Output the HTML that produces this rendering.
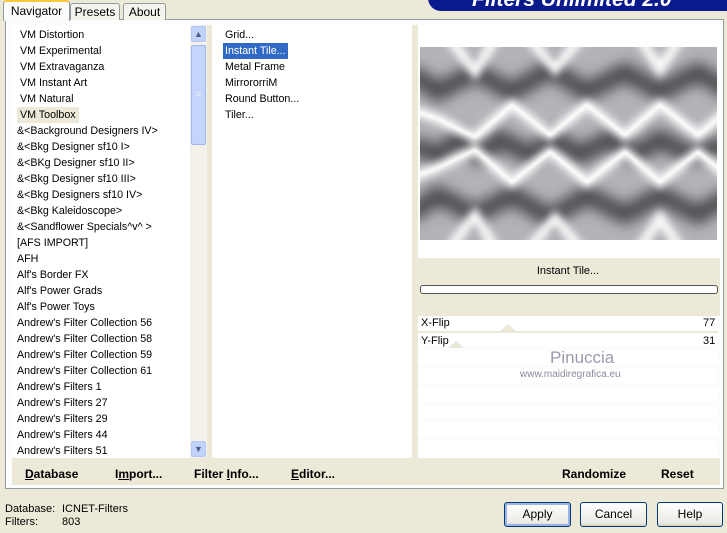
<!DOCTYPE html>
<html><head><style>
*{margin:0;padding:0;box-sizing:border-box}
body{width:727px;height:533px;background:#ece9d8;font-family:"Liberation Sans",sans-serif;font-size:11px;color:#000;position:relative;overflow:hidden}
.a{position:absolute}
.tab{position:absolute;border:1px solid #919b9c;border-bottom:none;background:#f4f3ee;text-align:center;font-size:12px;border-radius:3px 3px 0 0}
.li{position:absolute;left:0;height:16px;line-height:16px;white-space:nowrap;font-size:10.7px}
.btn{position:absolute;border:1px solid #003c74;border-radius:3px;background:linear-gradient(#fff,#ecebe6 85%,#d6d0c5);text-align:center;line-height:23px;font-size:12px}
.row{position:absolute;left:418px;width:300px;height:14px;background:#fff}
b{font-weight:bold}
</style></head><body>
<div class="a" style="left:428px;top:-2px;width:310px;height:13px;background:#0a1a8c;border-radius:0 0 0 18px;overflow:hidden">
<div class="a" style="left:44px;top:-10px;color:#fff;font:italic bold 21px 'Liberation Sans',sans-serif;white-space:nowrap">Filters Unlimited 2.0</div></div>
<div class="a" style="left:5px;top:19px;width:719px;height:470px;border:1px solid #919b9c;background:#fcfcfc"></div>
<div class="tab" style="left:70px;top:3px;width:50px;height:17px;line-height:17px">Presets</div>
<div class="tab" style="left:123px;top:3px;width:43px;height:17px;line-height:17px">About</div>
<div class="tab" style="left:3px;top:0;width:67px;height:21px;line-height:19px;background:#fcfcfc;border-top:2px solid #ffc83c">Navigator</div>
<div class="a" style="left:12px;top:25px;width:178px;height:433px;background:#fff;overflow:hidden">
<div class="li" style="top:2px;left:8px">VM Distortion</div>
<div class="li" style="top:18px;left:8px">VM Experimental</div>
<div class="li" style="top:34px;left:8px">VM Extravaganza</div>
<div class="li" style="top:50px;left:8px">VM Instant Art</div>
<div class="li" style="top:66px;left:8px">VM Natural</div>
<div class="li" style="top:82px;left:5px;padding:0 3px;background:#ece9d8">VM Toolbox</div>
<div class="li" style="top:98px;left:5px">&amp;&lt;Background Designers IV&gt;</div>
<div class="li" style="top:114px;left:5px">&amp;&lt;Bkg Designer sf10 I&gt;</div>
<div class="li" style="top:130px;left:5px">&amp;&lt;BKg Designer sf10 II&gt;</div>
<div class="li" style="top:146px;left:5px">&amp;&lt;Bkg Designer sf10 III&gt;</div>
<div class="li" style="top:162px;left:5px">&amp;&lt;Bkg Designers sf10 IV&gt;</div>
<div class="li" style="top:178px;left:5px">&amp;&lt;Bkg Kaleidoscope&gt;</div>
<div class="li" style="top:194px;left:5px">&amp;&lt;Sandflower Specials^v^ &gt;</div>
<div class="li" style="top:210px;left:5px">[AFS IMPORT]</div>
<div class="li" style="top:226px;left:5px">AFH</div>
<div class="li" style="top:242px;left:5px">Alf's Border FX</div>
<div class="li" style="top:258px;left:5px">Alf's Power Grads</div>
<div class="li" style="top:274px;left:5px">Alf's Power Toys</div>
<div class="li" style="top:290px;left:5px">Andrew's Filter Collection 56</div>
<div class="li" style="top:306px;left:5px">Andrew's Filter Collection 58</div>
<div class="li" style="top:322px;left:5px">Andrew's Filter Collection 59</div>
<div class="li" style="top:338px;left:5px">Andrew's Filter Collection 61</div>
<div class="li" style="top:354px;left:5px">Andrew's Filters 1</div>
<div class="li" style="top:370px;left:5px">Andrew's Filters 27</div>
<div class="li" style="top:386px;left:5px">Andrew's Filters 29</div>
<div class="li" style="top:402px;left:5px">Andrew's Filters 44</div>
<div class="li" style="top:418px;left:5px">Andrew's Filters 51</div>
</div>
<div class="a" style="left:190px;top:25px;width:17px;height:433px;background:#f3f1ea"></div>
<div class="a" style="left:191px;top:26px;width:15px;height:16px;background:#c1d3fb;border:1px solid #b3c8f5;border-radius:2px;text-align:center;font-size:9px;line-height:14px;color:#4d6185">&#9650;</div>
<div class="a" style="left:191px;top:45px;width:15px;height:100px;background:#c4d4fc;border:1px solid #9eb6ee;border-radius:2px;text-align:center;line-height:96px;color:#eef;font-size:9px">&#8801;</div>
<div class="a" style="left:191px;top:441px;width:15px;height:16px;background:#c1d3fb;border:1px solid #b3c8f5;border-radius:2px;text-align:center;font-size:9px;line-height:14px;color:#4d6185">&#9660;</div>
<div class="a" style="left:207px;top:25px;width:5px;height:433px;background:#ece9d8"></div>
<div class="a" style="left:212px;top:25px;width:200px;height:433px;background:#fff">
<div class="li" style="top:2px;left:13px">Grid...</div>
<div class="li" style="top:18px;left:11px;padding:0 2px;background:#316ac5;color:#fff">Instant Tile...</div>
<div class="li" style="top:34px;left:13px">Metal Frame</div>
<div class="li" style="top:50px;left:13px">MirrororriM</div>
<div class="li" style="top:66px;left:13px">Round Button...</div>
<div class="li" style="top:82px;left:13px">Tiler...</div>
</div>
<div class="a" style="left:412px;top:25px;width:6px;height:460px;background:#ece9d8"></div>
<div class="a" style="left:12px;top:458px;width:400px;height:27px;background:#ece9d8;font-weight:bold;font-size:12px;line-height:32px">
<span class="a" style="left:13px"><u>D</u>atabase</span><span class="a" style="left:103px">I<u>m</u>port...</span><span class="a" style="left:182px">Filter <u>I</u>nfo...</span><span class="a" style="left:279px"><u>E</u>ditor...</span></div>
<div class="a" style="left:418px;top:25px;width:302px;height:233px;background:#fff"></div>
<svg class="a" style="left:420px;top:47px" width="297" height="193" viewBox="0 0 297 193">
<defs><filter id="f" x="-20%" y="-50%" width="140%" height="200%"><feGaussianBlur stdDeviation="7"/></filter><filter id="h" x="-20%" y="-50%" width="140%" height="200%"><feGaussianBlur stdDeviation="4"/></filter><filter id="g"><feGaussianBlur stdDeviation="1.2"/></filter></defs>
<rect width="297" height="193" fill="#b4b4b8"/>
<g filter="url(#f)" fill="none" stroke="#48484e" stroke-width="18">
<path d="M-10 25 L18 45 L55 25 L92 45 L130 22 L167 45 L205 25 L240 45 L278 25 L310 45"/>
<path d="M-10 97 L18 108 L40 92 L60 108 L80 92 L110 108 L135 92 L160 108 L190 92 L215 108 L240 92 L270 108 L310 97"/>
<path d="M-10 168 L18 148 L55 168 L92 148 L130 171 L167 148 L205 168 L240 148 L278 168 L310 148"/>
</g>
<g filter="url(#h)" fill="none" stroke="#fafafc" stroke-width="10">
<path d="M-10 62 L18 72 L55 90 L92 58 L130 88 L167 58 L205 88 L240 58 L278 88 L310 62"/>
<path d="M-10 131 L18 121 L55 103 L92 135 L130 105 L167 135 L205 105 L240 135 L278 105 L310 131"/>
<path d="M30 -8 L55 25 L75 -8 M110 -8 L135 22 L160 -8 M220 -8 L240 22 L260 -8"/>
<path d="M30 201 L55 168 L75 201 M110 201 L135 171 L160 201 M220 201 L240 171 L260 201"/>
</g>
<g filter="url(#g)" fill="none" stroke="#fff" stroke-width="2.5">
<path d="M-10 62 L18 72 L55 90 L92 58 L130 88 L167 58 L205 88 L240 58 L278 88 L310 62"/>
<path d="M-10 131 L18 121 L55 103 L92 135 L130 105 L167 135 L205 105 L240 135 L278 105 L310 131"/>
</g>
</svg>
<div class="a" style="left:418px;top:258px;width:302px;height:58px;background:#ece9d8"></div>
<div class="a" style="left:418px;top:265px;width:300px;text-align:center;font-size:11px">Instant Tile...</div>
<div class="a" style="left:420px;top:285px;width:298px;height:9px;background:#fff;border:1px solid #555;border-radius:3px"></div>
<div class="row" style="top:317px"></div><div class="row" style="top:333px"></div><div class="row" style="top:351px"></div><div class="row" style="top:369px"></div><div class="row" style="top:387px"></div><div class="row" style="top:405px"></div><div class="row" style="top:423px"></div><div class="row" style="top:441px;height:17px"></div>
<div class="a" style="left:418px;top:331px;width:300px;height:2px;background:#ece9d8"></div>
<div class="a" style="left:500px;top:324px;width:0;height:0;border:8px solid transparent;border-bottom:7px solid #ece9d8;border-top:0"></div>
<div class="a" style="left:448px;top:341px;width:0;height:0;border:8px solid transparent;border-bottom:7px solid #ece9d8;border-top:0"></div>
<div class="a" style="left:421px;top:317px;font-size:11px">X-Flip</div><div class="a" style="left:703px;top:317px;font-size:11px">77</div>
<div class="a" style="left:421px;top:335px;font-size:11px">Y-Flip</div><div class="a" style="left:703px;top:335px;font-size:11px">31</div>
<div class="a" style="left:550px;top:348px;font-size:17px;color:#9a9ab0">Pinuccia</div>
<div class="a" style="left:520px;top:369px;font-size:10px;color:#8a8aa0">www.maidiregrafica.eu</div>
<div class="a" style="left:418px;top:458px;width:302px;height:27px;background:#ece9d8;font-weight:bold;font-size:12px;line-height:32px"><span class="a" style="left:144px">Randomize</span><span class="a" style="left:243px">Reset</span></div>
<div class="a" style="left:5px;top:503px;font-size:11px">Database:</div><div class="a" style="left:62px;top:503px;font-size:11px">ICNET-Filters</div>
<div class="a" style="left:5px;top:516px;font-size:11px">Filters:</div><div class="a" style="left:62px;top:516px;font-size:11px">803</div>
<div class="btn" style="left:504px;top:502px;width:67px;height:25px;box-shadow:inset 0 0 0 2px #9db3e8">Apply</div>
<div class="btn" style="left:580px;top:502px;width:67px;height:25px">Cancel</div>
<div class="btn" style="left:657px;top:502px;width:66px;height:25px">Help</div>
</body></html>
